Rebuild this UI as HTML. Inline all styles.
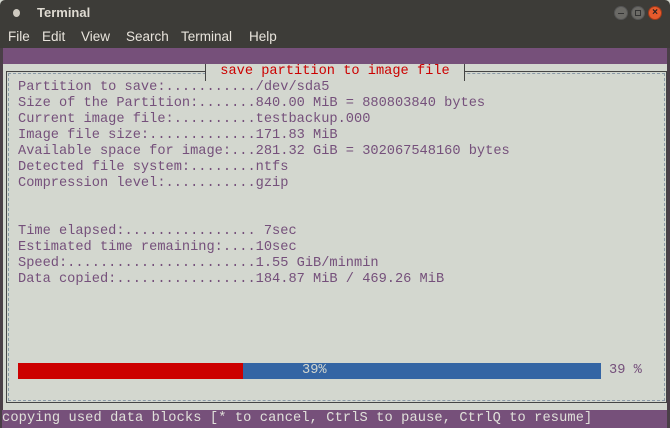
<!DOCTYPE html>
<html><head><style>
*{margin:0;padding:0;box-sizing:border-box}
body{width:670px;height:428px;overflow:hidden;background:#d3d7cf;font-family:"Liberation Mono",monospace;position:relative}
.tb{position:absolute;left:0;top:0;width:670px;height:26px;background:#3d3c38;border-radius:5px 5px 0 0;color:#dfdbd2;font:bold 13px "Liberation Sans",sans-serif}
.mb{position:absolute;left:0;top:26px;width:670px;height:22px;background:#3d3c38;color:#e8e4dc;font:13.5px "Liberation Sans",sans-serif}
.mb span{position:absolute;top:3px}
.pb{position:absolute;left:0;top:48px;width:670px;height:16px;background:#76507a;border-left:3px solid #4a3f47;border-right:3px solid #4a3f47}
.frame{position:absolute;left:6px;top:71px;width:661px;height:332px;border:1px solid #444;outline:1px dashed #8a9aa8;outline-offset:-3px}
.t{position:absolute;left:18px;color:#75507b;font-size:13.67px;line-height:16px;white-space:pre}
.circ{position:absolute;top:6px;width:14px;height:14px;border-radius:50%}
</style></head><body>
<div class="tb"><div style="position:absolute;left:13px;top:9px;width:7px;height:8px;border-radius:50%;background:#cfcac0"></div><span style="position:absolute;left:37px;top:5px">Terminal</span>
<div class="circ" style="left:614px;background:#6b6a66;border:1px solid #555"><div style="position:absolute;left:3px;top:6px;width:6px;height:1px;background:#333"></div></div>
<div class="circ" style="left:631px;background:#6b6a66;border:1px solid #555"><div style="position:absolute;left:3px;top:3px;width:6px;height:6px;border:1px solid #333"></div></div>
<div class="circ" style="left:648px;background:#e65a2c;border:1px solid #a03a1a;color:#222;font-size:10px;line-height:12px;text-align:center">×</div>
</div>
<div class="mb"><span style="left:8px">File</span><span style="left:42px">Edit</span><span style="left:81px">View</span><span style="left:126px">Search</span><span style="left:181px">Terminal</span><span style="left:249px">Help</span></div>
<div class="pb"></div>
<div style="position:absolute;left:0;top:64px;width:3px;height:346px;background:#4a3f47"></div>
<div style="position:absolute;right:0;top:64px;width:3px;height:346px;background:#4a3f47"></div>
<div class="frame"></div>
<div style="position:absolute;left:205px;top:64px;width:260px;height:17px;background:#d3d7cf;border-left:1px solid #444;border-right:1px solid #444;color:#cc0000;font-size:13.67px;line-height:16px;text-align:center">save partition to image file</div>
<div class="t" style="top:80px">Partition to save:...........<span>/dev/sda5</span>
Size of the Partition:.......840.00 MiB = 880803840 bytes
Current image file:..........testbackup.000
Image file size:.............171.83 MiB
Available space for image:...281.32 GiB = 302067548160 bytes
Detected file system:........ntfs
Compression level:...........gzip


Time elapsed:................ 7sec
Estimated time remaining:....10sec
Speed:.......................1.55 GiB/minmin
Data copied:.................184.87 MiB / 469.26 MiB</div>
<div style="position:absolute;left:18px;top:363px;width:225px;height:16px;background:#cc0000"></div>
<div style="position:absolute;left:243px;top:363px;width:358px;height:16px;background:#3465a4"></div>
<div style="position:absolute;left:302px;top:363px;color:#d3d7cf;font-size:13.67px;line-height:16px">39%</div>
<div style="position:absolute;left:609px;top:363px;color:#75507b;font-size:13.67px;line-height:16px">39 %</div>
<div style="position:absolute;left:0;top:410px;width:670px;height:18px;background:#76507a;border-left:2px solid #4a3f47;border-right:3px solid #4a3f47;color:#e0e0da;font-size:13.67px;letter-spacing:0.12px;line-height:17px;white-space:pre">copying used data blocks [* to cancel, CtrlS to pause, CtrlQ to resume]</div>
</body></html>
